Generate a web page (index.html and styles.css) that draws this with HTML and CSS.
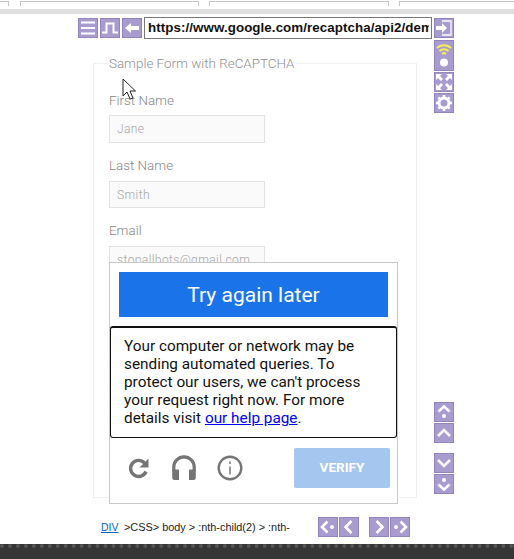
FILE: index.html
```html
<!DOCTYPE html>
<html lang="en">
<head>
<meta charset="utf-8">
<title>Sample Form with ReCAPTCHA</title>
<link rel="stylesheet" href="styles.css">
</head>
<body>
<div class="page">
  <div class="tabs"><span class="tab t1"></span><span class="tab t2"></span><span class="tab t3"></span><span class="tab t4"></span></div>
  <div class="strip"></div>
  <div class="workspace">
    <div class="center">
      <div class="toolbar">
        <span class="btn"><svg viewBox="0 0 20 20"><path d="M3 4.500h14M3 10h14M3 15.500h14" class="s"/></svg></span>
        <span class="btn"><svg viewBox="0 0 20 20"><path d="M2 14.500h4.500v-9h7v9H18" class="s"/></svg></span>
        <span class="btn"><svg viewBox="0 0 20 20"><path d="M3 10l6-5v3h8v4H9v3z" class="f"/></svg></span>
        <div class="urlbox"><div class="url">https://www.google.com/recaptcha/api2/demo</div></div>
      </div>
      <div class="content">
        <form class="card">
          <div class="legend">Sample Form with ReCAPTCHA</div>
          <label class="lab lab-first">First Name</label>
          <div class="field">Jane</div>
          <label class="lab">Last Name</label>
          <div class="field">Smith</div>
          <label class="lab">Email</label>
          <div class="field">stopallbots@gmail.com</div>
        </form>
        <svg class="cursor" viewBox="0 0 14 22"><path d="M1 1v17l4-4 3 7 3-1-3-7h5.500z" fill="#fff" stroke="#222" stroke-width="1"/></svg>
        <div class="captcha">
          <div class="try">Try again later</div>
          <div class="msg">Your computer or network may be sending automated queries. To protect our users, we can't process your request right now. For more details visit <a href="#">our help page</a>.</div>
          <div class="cfoot">
            <svg class="ci ci1" viewBox="0 0 24 24"><path d="M19 15.500a8 8 0 1 1-1.500-8.500" fill="none" stroke="#757575" stroke-width="3.400"/><path d="M21.500 2.500v9h-9z" fill="#757575"/></svg>
            <svg class="ci ci2" viewBox="0 0 26 26"><path d="M2.800 16v-4a10.200 10.200 0 0 1 20.400 0v4" fill="none" stroke="#757575" stroke-width="3.200"/><path d="M1.200 14.500H8V25H3.500a2.300 2.300 0 0 1-2.300-2.300zM24.800 14.500H18V25h4.500a2.300 2.300 0 0 0 2.300-2.300z" fill="#757575"/></svg>
            <svg class="ci ci3" viewBox="0 0 26 26"><circle cx="13" cy="13" r="11.300" fill="none" stroke="#757575" stroke-width="2.400"/><path d="M13 6.500v2.500M13 11.500v8" stroke="#757575" stroke-width="1.500"/></svg>
            <button class="verify" type="button">VERIFY</button>
          </div>
        </div>
      </div>
      <div class="crumbs">
        <a class="div-link" href="#">DIV</a>
        <span class="path">&gt;CSS&gt; body &gt; :nth-child(2) &gt; :nth-</span>
        <div class="nav">
          <span class="btn"><svg viewBox="0 0 20 20"><path d="M9.500 4.500L4 10l5.500 5.500" class="s w"/><circle cx="14" cy="10" r="2" class="f"/></svg></span>
          <span class="btn"><svg viewBox="0 0 20 20"><path d="M12.500 4l-6 6 6 6" class="s w"/></svg></span>
          <span class="btn gap"><svg viewBox="0 0 20 20"><path d="M7.500 4l6 6-6 6" class="s w"/></svg></span>
          <span class="btn"><svg viewBox="0 0 20 20"><path d="M10.500 4.500L16 10l-5.500 5.500" class="s w"/><circle cx="6" cy="10" r="2" class="f"/></svg></span>
        </div>
      </div>
    </div>
    <div class="rail">
      <div class="rail-top">
        <span class="btn"><svg viewBox="0 0 20 20"><path d="M8 3h9v14H8" class="s thin"/><path d="M2 8h6V5l5 5-5 5v-3H2z" class="f"/></svg></span>
        <span class="btn tall"><svg viewBox="0 0 20 31"><path d="M3 8a10 10 0 0 1 14 0M5.500 11a6.500 6.500 0 0 1 9 0M8 14a3 3 0 0 1 4 0" fill="none" stroke="#f5ee55" stroke-width="2"/><circle cx="10" cy="22.500" r="4" class="f"/></svg></span>
        <span class="btn"><svg viewBox="0 0 20 20"><path d="M2 2h6L6 4l3 3-2 2-3-3-2 2zM18 2v6l-2-2-3 3-2-2 3-3-2-2zM2 18v-6l2 2 3-3 2 2-3 3 2 2zM18 18h-6l2-2-3-3 2-2 3 3 2-2z" class="f"/></svg></span>
        <span class="btn"><svg viewBox="0 0 20 20"><circle cx="10" cy="10" r="5" fill="none" stroke="#fff" stroke-width="3"/><path d="M10 2v16M2 10h16M4.300 4.300l11.400 11.400M15.700 4.300L4.300 15.700" stroke="#fff" stroke-width="2.600" stroke-dasharray="3.500 9 3.500"/></svg></span>
      </div>
      <div class="rail-bottom">
        <span class="btn"><svg viewBox="0 0 20 20"><path d="M4.500 9.500L10 4.500l5.500 5" class="s w"/><circle cx="10" cy="14" r="2" class="f"/></svg></span>
        <span class="btn"><svg viewBox="0 0 20 20"><path d="M4 13l6-6 6 6" class="s w"/></svg></span>
        <span class="btn gapv"><svg viewBox="0 0 20 20"><path d="M4 7l6 6 6-6" class="s w"/></svg></span>
        <span class="btn"><svg viewBox="0 0 20 20"><path d="M4.500 10.500l5.500 5 5.500-5" class="s w"/><circle cx="10" cy="6" r="2" class="f"/></svg></span>
      </div>
    </div>
  </div>
  <div class="footer"></div>
</div>
</body>
</html>
```
FILE: styles.css
```css
* { box-sizing: border-box; }
html, body { margin: 0; padding: 0; background: #fff; }
body { width: 514px; height: 559px; overflow: hidden; font-family: Roboto, sans-serif; }
.page { height: 559px; display: flex; flex-direction: column; }
.tabs { height: 9px; display: flex; flex: none; background: #fff; padding-top: 1px; gap: 10px; }
.tab { display: block; height: 5px; border: 1px solid #c4c4c4; border-bottom: 0; flex: none; }
.t1 { width: 9px; border-left: 0; margin-right: 1px; }
.t2 { width: 179px; }
.t3 { width: 180px; }
.t4 { width: 115px; border-right: 0; }
.strip { height: 5px; flex: none; background: #dfdfdf; }
.workspace { flex: 1; display: flex; padding-left: 78px; min-height: 0; }
.center { width: 354px; display: flex; flex-direction: column; }
.rail { width: 20px; margin-left: 2px; padding-top: 4px; padding-bottom: 50px; display: flex; flex-direction: column; justify-content: space-between; }
.rail-top, .rail-bottom { display: flex; flex-direction: column; gap: 1px; }
.rail-top .btn:first-child { margin-bottom: 1px; }
.btn { display: block; flex: none; width: 20px; height: 20px; background: #a79bd0; border: 1px solid #9484bc; }
.btn svg { display: block; width: 20px; height: 20px; margin: -1px; }
.btn.tall { height: 31px; }
.btn.tall svg { height: 31px; }
.gapv { margin-top: 9px; }
.gap { margin-left: 9px; }
.s { fill: none; stroke: #fff; stroke-width: 2; }
.s.w { stroke-width: 2.600; }
.s.thin { stroke-width: 1.300; }
.f { fill: #fff; }
.toolbar { display: flex; align-items: flex-start; gap: 2px; padding-top: 4px; height: 49px; }
.urlbox { width: 288px; height: 22px; margin-top: -1px; border: 1px solid #777; background: #fff; padding: 2px; }
.url { height: 16px; font: bold 13.330px/16px "Liberation Sans", Arial, sans-serif; color: #111; overflow: hidden; white-space: nowrap; padding-left: 1px; letter-spacing: .08px; }
.content { position: relative; flex: 1; min-height: 0; }
.card { margin-left: 15px; width: 324px; height: 435px; border: 1px solid #efefef; padding: 0 15px; }
.legend { margin-top: -8px; width: 187px; height: 16px; background: #fff; font: 300 13.400px/16px Roboto, sans-serif; color: #909090; white-space: nowrap; }
.lab { display: block; font: 300 13.400px/16px Roboto, sans-serif; color: #858585; height: 16px; margin-top: 15px; margin-bottom: 7px; }
.lab-first { margin-top: 21px; margin-bottom: 6px; }
.field { width: 156px; height: 27.500px; background: #fafafa; border: 1px solid #e2e2e2; font: 300 12px/26px Roboto, sans-serif; letter-spacing: .4px; color: #a6a6a6; padding-left: 7px; white-space: nowrap; overflow: hidden; }
.cursor { position: absolute; left: 44px; top: 15px; width: 14px; height: 22px; }
.captcha { position: absolute; left: 31px; top: 199px; width: 289px; height: 242px; background: #fff; border: 1px solid #c8c8c8; padding-top: 9px; display: flex; flex-direction: column; }
.try { margin-left: 9px; width: 269px; height: 45px; padding-top: 1px; background: #1a73e8; color: #fff; font: 400 21px/45px Roboto, sans-serif; text-align: center; }
.msg { margin-top: 9px; width: 287px; height: 112px; border: 1px solid #111; border-top-width: 2px; border-radius: 3px; padding: 9px 12px 0 13px; font: 400 15.330px/18px Roboto, sans-serif; color: #111; }
.msg a { color: #00e; text-decoration: underline; }
.cfoot { display: flex; align-items: center; height: 60px; padding-left: 17px; }
.ci { display: block; flex: none; }
.ci1 { width: 24px; height: 24px; }
.ci2 { width: 26px; height: 26px; margin-left: 20px; }
.ci3 { width: 26px; height: 26px; margin-left: 20px; }
.verify { margin-left: auto; margin-right: 7px; width: 96px; height: 40px; border: 0; border-radius: 2px; background: #a4c6ef; color: #fff; font: 700 13.500px/38px Roboto, sans-serif; padding: 0 0 2px; }
.crumbs { display: flex; align-items: center; height: 22px; margin-bottom: 6px; padding-left: 23px; font: 10.900px/14px "Liberation Sans", Arial, sans-serif; color: #222; }
.div-link { color: #0b63c4; text-decoration: underline; width: 23px; flex: none; font-size: 10.500px; }
.path { white-space: nowrap; width: 194px; flex: none; }
.nav { display: flex; gap: 1px; }
.footer { height: 15px; flex: none; background: #363636; border-top: 4px dotted #555; }
```
